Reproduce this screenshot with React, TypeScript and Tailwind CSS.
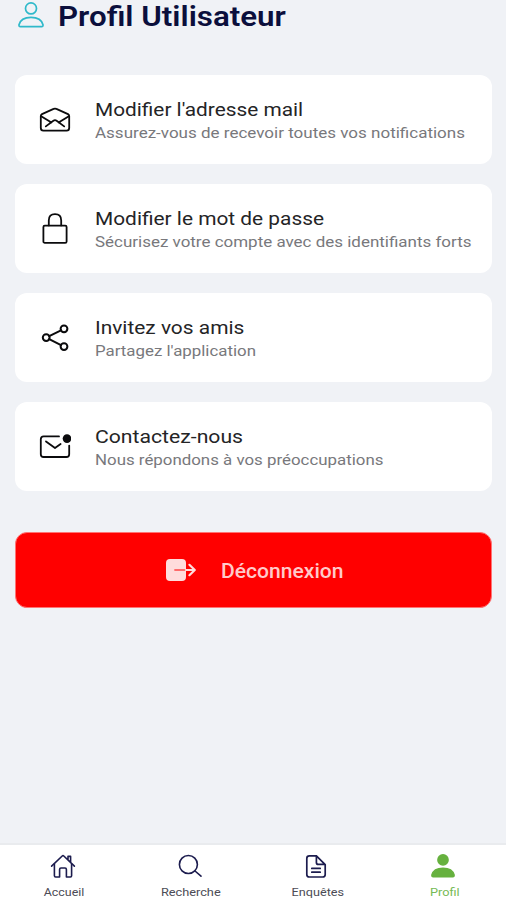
import type { ReactNode } from "react";

const strokeProps = {
    fill: "none",
    stroke: "currentColor",
    strokeWidth: 1.8,
    strokeLinecap: "round",
    strokeLinejoin: "round",
} as const;

function MailOpenIcon() {
    return (
        <svg viewBox="0 0 32 32" className="size-8" {...strokeProps}>
            <path d="M1.8 12Q1.8 10.8 3 10.1L14.6 4.9Q16 4.2 17.4 4.9L29 10.1Q30.2 10.8 30.2 12V24Q30.2 26.6 27.6 26.6H4.4Q1.8 26.6 1.8 24Z" />
            <path d="M2.6 12.4L12.4 18.6M29.4 12.4L19.6 18.6M6.8 22.4L14.4 16.7Q16 15.6 17.6 16.7L25.2 22.4" />
        </svg>
    );
}

function LockIcon() {
    return (
        <svg viewBox="0 0 32 32" className="size-8" {...strokeProps}>
            <path d="M9.8 12.4V7.4Q9.8 1.2 16 1.2T22.2 7.4V12.4" />
            <rect x="4.4" y="12.6" width="23.2" height="17.2" rx="1.4" />
        </svg>
    );
}

function ShareIcon() {
    return (
        <svg viewBox="0 0 32 32" className="size-8" {...strokeProps} strokeWidth={2}>
            <circle cx="7.2" cy="15.6" r="3.4" />
            <circle cx="25" cy="6.8" r="3.4" />
            <circle cx="25" cy="24.6" r="3.4" />
            <path d="M10.2 14.1L22 8.3M10.2 17.1L22 23.1" />
        </svg>
    );
}

function MailUnreadIcon() {
    return (
        <svg viewBox="0 0 32 32" className="size-8" {...strokeProps}>
            <path d="M20 5.4H4.6Q1.8 5.4 1.8 8.2V23.2Q1.8 26 4.6 26H27.4Q30.2 26 30.2 23.2V14.6" />
            <path d="M7 10.4L16 17L21.6 13" />
            <circle cx="28" cy="7.6" r="4.3" fill="currentColor" stroke="none" />
        </svg>
    );
}

function ExitIcon() {
    return (
        <svg viewBox="0 0 32 26" className="h-[26px] w-8" fill="none">
            <rect x="1" y="2" width="20" height="22" rx="4" fill="#ffdcdc" />
            <path d="M10 13H21" stroke="#ff6b6b" strokeWidth="1.8" strokeLinecap="round" />
            <path d="M21 13H29.6M24.4 7.8L29.8 13L24.4 18.2" stroke="#ffdcdc" strokeWidth="2.2" strokeLinecap="round" strokeLinejoin="round" />
        </svg>
    );
}

function PersonIcon({ filled = false, className }: { filled?: boolean; className: string }) {
    return (
        <svg viewBox="0 0 26 26" className={className} {...strokeProps} strokeWidth={1.7} fill={filled ? "currentColor" : "none"}>
            <circle cx="13" cy="6.4" r="5.5" />
            <path d="M1 22.8C2.2 18 7 15.4 13 15.4S23.8 18 25 22.8Q25.2 24.6 23.6 24.6H2.4Q.8 24.6 1 22.8Z" />
        </svg>
    );
}

function HomeIcon() {
    return (
        <svg viewBox="0 0 26 26" className="size-[26px]" {...strokeProps} strokeWidth={1.6}>
            <path d="M4.4 11V22.8Q4.4 24 5.6 24H9.6V16.4Q9.6 15 11 15H15Q16.4 15 16.4 16.4V24H20.4Q21.6 24 21.6 22.8V11" />
            <path d="M1.6 13.2L12.2 3Q13 2.3 13.8 3L24.4 13.2M20.6 9.2V3.4H18V6.6" />
        </svg>
    );
}

function SearchIcon() {
    return (
        <svg viewBox="0 0 26 26" className="size-[26px]" {...strokeProps} strokeWidth={1.6}>
            <circle cx="11.4" cy="11.5" r="9" />
            <path d="M18 18L24 23.2" />
        </svg>
    );
}

function DocumentIcon() {
    return (
        <svg viewBox="0 0 26 26" className="size-[26px]" {...strokeProps} strokeWidth={1.7}>
            <path d="M13 2.8H6.4Q3.8 2.8 3.8 5.4V21.4Q3.8 24 6.4 24H19.6Q22.2 24 22.2 21.4V11.6L13.4 2.8V9.4Q13.4 11.4 15.4 11.4H22" />
            <path d="M8.8 15.4H17.2M8.8 19.2H17.2" />
        </svg>
    );
}

type CardProps = {
    icon: ReactNode;
    title: string;
    subtitle: string;
    titleClass: string;
    subtitleClass: string;
};

function SettingCard({ icon, title, subtitle, titleClass, subtitleClass }: CardProps) {
    return (
        <button className="flex h-[89px] w-full items-center gap-6 rounded-xl bg-white pl-6 text-left text-[#0b0b0d]">
            {icon}
            <span className="flex flex-col items-start whitespace-nowrap pt-1">
                <span className={`origin-left text-[19px] leading-6 text-[#242426] ${titleClass}`}>{title}</span>
                <span className={`origin-left text-[14.5px] leading-6 text-[#78787c] ${subtitleClass}`}>{subtitle}</span>
            </span>
        </button>
    );
}

const cards: CardProps[] = [
    { icon: <MailOpenIcon />, title: "Modifier l'adresse mail", subtitle: "Assurez-vous de recevoir toutes vos notifications", titleClass: "scale-x-[1.095]", subtitleClass: "scale-x-[1.173]" },
    { icon: <LockIcon />, title: "Modifier le mot de passe", subtitle: "Sécurisez votre compte avec des identifiants forts", titleClass: "scale-x-[1.098]", subtitleClass: "scale-x-[1.17]" },
    { icon: <ShareIcon />, title: "Invitez vos amis", subtitle: "Partagez l'application", titleClass: "scale-x-[1.1]", subtitleClass: "scale-x-[1.163]" },
    { icon: <MailUnreadIcon />, title: "Contactez-nous", subtitle: "Nous répondons à vos préoccupations", titleClass: "scale-x-[1.115]", subtitleClass: "scale-x-[1.163]" },
];

const tabs = [
    { label: "Accueil", icon: <HomeIcon />, active: false, labelClass: "ml-0.5 scale-x-[1.13]" },
    { label: "Recherche", icon: <SearchIcon />, active: false, labelClass: "ml-0.5 scale-x-[1.16]" },
    { label: "Enquêtes", icon: <DocumentIcon />, active: false, labelClass: "ml-1 scale-x-[1.15]" },
    { label: "Profil", icon: <PersonIcon filled className="my-px size-[24px]" />, active: true, labelClass: "ml-1 scale-x-[1.16]" },
];

function App() {
    return (
        <div className="flex h-[900px] w-full flex-col overflow-hidden bg-[#f0f2f6] font-['Roboto',sans-serif]">
            <header className="flex h-[75px] items-start gap-3.5 pl-[18px]">
                <PersonIcon className="mt-[2px] size-[26px] text-[#2fb9ca]" />
                <h1 className="mt-px origin-left scale-x-[1.16] whitespace-nowrap text-[27px] font-semibold leading-8 text-[#0b0f3c]">Profil Utilisateur</h1>
            </header>
            <main className="flex flex-1 flex-col gap-5 pl-[15px] pr-[14px]">
                {cards.map((card) => (
                    <SettingCard key={card.title} {...card} />
                ))}
                <button className="mt-[21px] flex h-[76px] items-center justify-center gap-6 rounded-xl border border-[#ff7474] bg-[#ff0000] text-[20px] font-medium text-[#ffcaca]">
                    <ExitIcon />
                    <span className="w-[121px] pt-0.5 text-left">
                        <span className="inline-block origin-left scale-x-[1.055]">Déconnexion</span>
                    </span>
                </button>
            </main>
            <nav className="grid h-[57px] grid-cols-4 border-t-2 border-[#e9ebee] bg-white">
                {tabs.map((tab) => (
                    <a key={tab.label} href="#" className={`flex flex-col items-center pt-2 ${tab.active ? "text-[#66b13e]" : "text-[#1c1c4e]"}`}>
                        {tab.icon}
                        <span className={`mt-1.5 text-[11px] leading-4 ${tab.labelClass} ${tab.active ? "text-[#76ba55]" : "text-[#4c4c56]"}`}>{tab.label}</span>
                    </a>
                ))}
            </nav>
        </div>
    );
}

export default App;
